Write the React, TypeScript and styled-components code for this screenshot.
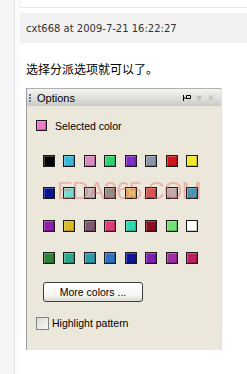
import React from 'react';
import styled, {createGlobalStyle} from 'styled-components';

const Global = createGlobalStyle`
  html, body {
    margin: 0;
    padding: 0;
    background: #fff;
  }
  body {
    font-family: "Liberation Sans", Arial, sans-serif;
  }
`;

const Page = styled.div`
  display: flex;
  width: 247px;
  height: 374px;
  overflow: hidden;
`;

const Rail = styled.div`
  width: 14px;
  flex: none;
  background: #f4f6f8;
  border-right: 1px solid #e2e6ea;
`;

const Spacer = styled.div`
  width: 5px;
  flex: none;
  background: #fafbfc;
`;

const Main = styled.div`
  flex: 1;
  display: flex;
  flex-direction: column;
`;

const PrevPost = styled.div`
  height: 7px;
  border-left: 1px solid #eceef0;
  border-bottom: 1px solid #e6e8ea;
  margin-bottom: 5px;
`;

const PostHead = styled.div`
  height: 30px;
  background: #f2f2f2;
  display: flex;
  align-items: center;
  padding-left: 6px;
  font-family: "DejaVu Sans", Verdana, sans-serif;
  font-size: 10px;
  color: #333;
`;

const PostBody = styled.div`
  padding: 19px 0 0 6px;
`;

const Message = styled.p`
  margin: 0 0 12px;
  font-family: "Noto Sans CJK SC", sans-serif;
  font-size: 12px;
  line-height: 14px;
  color: #000;
`;

const Panel = styled.div`
  position: relative;
  width: 194px;
  height: 262px;
  background: #ebe8db;
  border-left: 1px solid #9c9c9c;
  border-right: 1px solid #dfe3d3;
  font-size: 10.5px;
  color: #000;
`;

const TitleBar = styled.div`
  height: 18px;
  display: flex;
  align-items: center;
  background: linear-gradient(#f4f4f2, #dcdcd8 60%, #c9c9c5);
  border-top: 1px solid #b0b0b0;
  padding: 0 4px 0 2px;
  box-sizing: border-box;
`;

const Grip = styled.div`
  display: flex;
  flex-direction: column;
  gap: 1px;
  margin-right: 6px;
  span {
    width: 2px;
    height: 2px;
    background: #6479a2;
  }
`;

const Title = styled.span`
  flex: 1;
  font-size: 11px;
`;

const TitleBtn = styled.span<{faded?: boolean}>`
  width: 12px;
  display: flex;
  justify-content: center;
  color: ${p => (p.faded ? '#bdbdbd' : '#000')};
  font-size: 9px;
`;

const Content = styled.div`
  padding: 14px 0 0 9px;
  display: flex;
  flex-direction: column;
`;

const SelectedRow = styled.div`
  display: flex;
  align-items: center;
  gap: 8px;
  height: 11px;
`;

const Swatch = styled.div<{c: string; size?: number}>`
  width: ${p => p.size || 12}px;
  height: ${p => p.size || 12}px;
  box-sizing: border-box;
  background: ${p => p.c};
  border: 1px solid #1a1a1a;
  box-shadow: inset 1px 1px 0 rgba(255, 255, 255, 0.25), inset -1px -1px 0 rgba(0, 0, 0, 0.2);
`;

const Grid = styled.div`
  display: grid;
  grid-template-columns: repeat(8, 12px);
  column-gap: 8.43px;
  row-gap: 20.3px;
  margin: 24px 0 0 7px;
`;

const MoreButton = styled.button`
  margin: 18px 0 0 7px;
  width: 100px;
  height: 20px;
  border: 1px solid #3c3c3c;
  border-radius: 3px;
  background: linear-gradient(#ffffff, #f4f4f0 70%, #dcdcd6);
  font-family: "Liberation Sans", Arial, sans-serif;
  font-size: 10.5px;
  color: #000;
  padding: 0;
`;

const CheckRow = styled.label`
  display: flex;
  align-items: center;
  gap: 3px;
  margin-top: 15px;
  height: 13px;
`;

const Box = styled.span`
  width: 13px;
  height: 13px;
  box-sizing: border-box;
  border: 1px solid #7f8589;
  background: linear-gradient(135deg, #dcdcd6, #f6f6f4);
`;

// site watermark laid over the swatches
const Watermark = styled.div`
  position: absolute;
  left: 30px;
  top: 89px;
  font-family: "Liberation Sans", Arial, sans-serif;
  font-size: 24px;
  letter-spacing: -0.8px;
  color: rgba(232, 90, 90, 0.38);
  pointer-events: none;
`;

const rows = [
  ['#000000', '#3cb6da', '#d88ac2', '#2fd272', '#7e2ec9', '#8898aa', '#d0161c', '#f0ea28'],
  ['#0c1690', '#74dad0', '#c2bec2', '#8e9086', '#e8ba6c', '#d85252', '#c2aaaa', '#2e9ec2'],
  ['#8e1ea8', '#d8ba22', '#7e5670', '#e03a7a', '#30d8b2', '#8c0e1e', '#72e276', '#ffffff'],
  ['#2e8232', '#2ea88a', '#2e98aa', '#2e70c2', '#0c1898', '#7e20b2', '#a02ea2', '#c01e5e'],
];

const Pin = () => (
  <svg width="10" height="8" viewBox="0 0 10 8">
    <path d="M1.5 1v6M1.5 4h3M4.5 1.5h4v3h-4z" stroke="#000" strokeWidth="1" fill="none"/>
  </svg>
);

export default function App() {
  return (
    <Page>
      <Global/>
      <Rail/>
      <Spacer/>
      <Main>
        <PrevPost/>
        <PostHead>cxt668 at 2009-7-21 16:22:27</PostHead>
        <PostBody>
          <Message>选择分派选项就可以了。</Message>
          <Panel>
            <TitleBar>
              <Grip><span/><span/><span/></Grip>
              <Title>Options</Title>
              <TitleBtn><Pin/></TitleBtn>
              <TitleBtn faded>▼</TitleBtn>
              <TitleBtn faded>✕</TitleBtn>
            </TitleBar>
            <Content>
              <SelectedRow>
                <Swatch c="#ec78c8" size={11}/>
                <span>Selected color</span>
              </SelectedRow>
              <Grid>
                {rows.flat().map((c, i) => <Swatch key={i} c={c}/>)}
              </Grid>
              <div><MoreButton>More colors ...</MoreButton></div>
              <CheckRow>
                <Box/>
                <span>Highlight pattern</span>
              </CheckRow>
            </Content>
            <Watermark>EDA365.COM</Watermark>
          </Panel>
        </PostBody>
      </Main>
    </Page>
  );
}
